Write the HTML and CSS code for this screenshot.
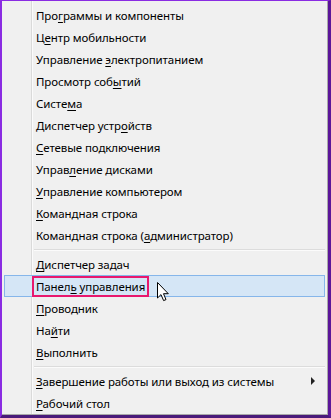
FILE: index.html
```html
<!DOCTYPE html>
<html lang="ru">
<head>
    <meta charset="UTF-8">
    <meta name="viewport" content="width=device-width, initial-scale=1.0">
    <title>Меню Win+X</title>
    <link rel="stylesheet" href="styles.css">
</head>
<body>
    <div class="okno">
        <ul class="menu">
            <li class="punkt"><span class="tekst">Про<u>г</u>раммы и компоненты</span></li>
            <li class="punkt"><span class="tekst">Ц<u>е</u>нтр мобильности</span></li>
            <li class="punkt"><span class="tekst">Управление <u>э</u>лектропитанием</span></li>
            <li class="punkt"><span class="tekst">Просмотр соб<u>ы</u>тий</span></li>
            <li class="punkt"><span class="tekst">Систе<u>м</u>а</span></li>
            <li class="punkt"><span class="tekst">Диспетчер устр<u>о</u>йств</span></li>
            <li class="punkt"><span class="tekst"><u>С</u>етевые подключения</span></li>
            <li class="punkt"><span class="tekst">Управ<u>л</u>ение дисками</span></li>
            <li class="punkt"><span class="tekst"><u>У</u>правление компьютером</span></li>
            <li class="punkt"><span class="tekst"><u>К</u>омандная строка</span></li>
            <li class="punkt"><span class="tekst">Командная строка (<u>а</u>дминистратор)</span></li>
            <li class="razdel"></li>
            <li class="punkt"><span class="tekst"><u>Д</u>испетчер задач</span></li>
            <li class="punkt aktywny"><span class="tekst">Панел<u>ь</u> управления</span></li>
            <li class="punkt"><span class="tekst"><u>П</u>роводник</span></li>
            <li class="punkt"><span class="tekst">На<u>й</u>ти</span></li>
            <li class="punkt"><span class="tekst"><u>В</u>ыполнить</span></li>
            <li class="razdel"></li>
            <li class="punkt"><span class="tekst"><u>З</u>авершение работы или выход из системы</span><span class="strzalka"></span></li>
            <li class="punkt"><span class="tekst"><u>Р</u>абочий стол</span></li>
        </ul>
        <svg class="kursor" width="13" height="20" viewBox="0 0 13 20">
            <path d="M0.5 0.5 L0.5 16 L4 12.6 L6.6 18.6 L9 17.6 L6.5 11.7 L11.3 11.7 Z" fill="#fff" stroke="#000" stroke-width="1" stroke-linejoin="miter"/>
        </svg>
    </div>
</body>
</html>
```
FILE: styles.css
```css
html, body {
    margin: 0;
    padding: 0;
    background-color: #f0f0f0;
}
.okno {
    position: relative;
    box-sizing: border-box;
    width: 331px;
    height: 418px;
    border-top: 1px solid #8a2be2;
    border-left: 2px solid #8a2be2;
    border-right: 3px solid #5b1699;
    border-bottom: 3px solid #4a1a7a;
}
.menu {
    list-style: none;
    box-sizing: border-box;
    margin: 0;
    padding: 3px 2px 0 2px;
    height: 100%;
    border-right: 1px solid #a9a9a9;
    border-bottom: 1px solid #a9a9a9;
    background-color: #f0f0f0;
    background-image: linear-gradient(to right, transparent 29px, #dadada 29px, #dadada 30px, #fbfbfb 30px, #fbfbfb 31px, transparent 31px);
    font-family: "Noto Sans", "Open Sans", sans-serif;
    font-size: 11.5px;
    color: #000;
}
.punkt {
    display: flex;
    align-items: center;
    box-sizing: border-box;
    height: 22px;
    padding-left: 27px;
    padding-right: 9px;
    border: 1px solid transparent;
}
.tekst {
    display: inline-block;
    padding: 0 2px;
    line-height: 17px;
    border: 2px solid transparent;
    white-space: nowrap;
    letter-spacing: -0.1px;
}
.tekst u {
    text-underline-offset: 2px;
}
.aktywny {
    background-color: #d5e6f6;
    border-color: #86b6ea;
}
.aktywny .tekst {
    border-color: #e8186e;
}
.razdel {
    height: 7px;
    margin-left: 30px;
    background: linear-gradient(to bottom, transparent 3px, #dcdcdc 3px, #dcdcdc 4px, #fbfbfb 4px, #fbfbfb 5px, transparent 5px);
}
.strzalka {
    margin-left: auto;
    width: 0;
    height: 0;
    border-top: 4px solid transparent;
    border-bottom: 4px solid transparent;
    border-left: 4px solid #222;
}
.kursor {
    position: absolute;
    left: 155px;
    top: 281px;
}
```
